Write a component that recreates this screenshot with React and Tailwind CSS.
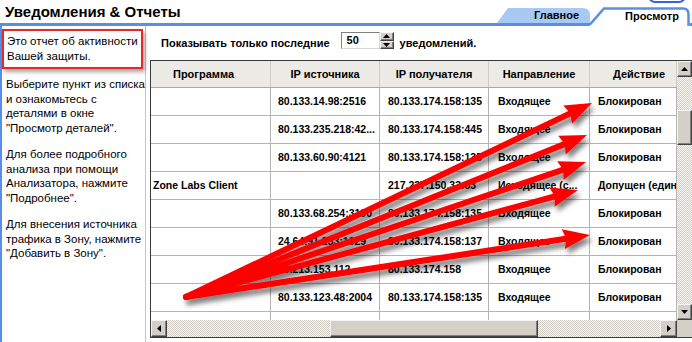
import React from "react";

const BLUE = "#5a8ee6";

const rows = [
  ["", "80.133.14.98:2516", "80.133.174.158:135", "Входящее", "Блокирован"],
  ["", "80.133.235.218:42...", "80.133.174.158:445", "Входящее", "Блокирован"],
  ["", "80.133.60.90:4121", "80.133.174.158:135", "Входящее", "Блокирован"],
  ["Zone Labs Client", "", "217.237.150.33:53", "Исходящее (с...", "Допущен (единичный)"],
  ["", "80.133.68.254:3190", "80.133.174.158:135", "Входящее", "Блокирован"],
  ["", "24.64.91.233:1029", "80.133.174.158:137", "Входящее", "Блокирован"],
  ["", "80.213.153.112", "80.133.174.158", "Входящее", "Блокирован"],
  ["", "80.133.123.48:2004", "80.133.174.158:135", "Входящее", "Блокирован"],
  ["", "80.133.94.149", "80.133.174.158", "Входящее", "Блокирован"],
];

const colW = ["w-[120px]", "w-[109px]", "w-[109px]", "w-[101px]", "w-[87px]"];
const colPad = ["pl-[2px]", "pl-[7px]", "pl-[8px]", "pl-[9px]", "pl-[8px]"];
const headers = ["Программа", "IP источника", "IP получателя", "Направление", "Действие"];
const headPad = ["pr-[14px]", "", "", "", "pl-[12px]"];

function Tri({ dir, w = 7, h = 4 }) {
  const pts = {
    up: `0,${h} ${w / 2},0 ${w},${h}`,
    down: `0,0 ${w / 2},${h} ${w},0`,
  };
  if (dir === "left" || dir === "right") {
    const p = dir === "left" ? `${h},0 0,${w / 2} ${h},${w}` : `0,0 ${h},${w / 2} 0,${w}`;
    return (
      <svg width={h} height={w}>
        <polygon points={p} fill="#000" />
      </svg>
    );
  }
  return (
    <svg width={w} height={h}>
      <polygon points={pts[dir]} fill="#000" />
    </svg>
  );
}

function Btn({ dir, className }) {
  return (
    <div
      className={
        "flex items-center justify-center bg-[#d4d0c8] border border-t-[#f4f4f4] border-l-[#f4f4f4] border-r-[#404040] border-b-[#404040] shadow-[inset_-1px_-1px_0_#808080] " +
        className
      }
    >
      <Tri dir={dir} />
    </div>
  );
}

const dither =
  "bg-[image:repeating-conic-gradient(#d4d0c8_0%_25%,#f5f4ef_0%_50%)] bg-[length:2px_2px]";

const origin = [186, 297];
const tips = [
  [592, 103],
  [587, 135],
  [586, 162],
  [578, 190],
  [590, 235],
];

function Arrow({ tip }) {
  const [x1, y1] = origin;
  const [x2, y2] = tip;
  const dx = x2 - x1;
  const dy = y2 - y1;
  const len = Math.hypot(dx, dy);
  const ux = dx / len;
  const uy = dy / len;
  const L = 27;
  const W = 10;
  const bx = x2 - ux * L;
  const by = y2 - uy * L;
  const nx = -uy;
  const ny = ux;
  return (
    <g>
      <line
        x1={x1}
        y1={y1}
        x2={bx + ux * 4}
        y2={by + uy * 4}
        stroke="#ff0000"
        strokeWidth="6"
        strokeLinecap="round"
      />
      <polygon
        points={`${x2},${y2} ${bx + nx * W},${by + ny * W} ${bx + ux * 3},${by + uy * 3} ${bx - nx * W},${by - ny * W}`}
        fill="#ff0000"
      />
    </g>
  );
}

export default function App() {
  return (
    <div className="relative w-[692px] h-[342px] overflow-hidden bg-white text-black font-['Liberation_Sans',Arial,sans-serif]">
      {/* header */}
      <div className="flex h-[26px]">
        <div className="flex-1 border-b-[3px] border-[#5a8ee6] pl-[5px] pt-[2px] text-[15px] font-bold leading-[20px] whitespace-nowrap">
          Уведомления &amp; Отчеты
        </div>
        <div className="relative w-[93px] border-b-[3px] border-[#5a8ee6]">
          <svg className="absolute left-0 top-[8px]" width="93" height="15">
            <path d="M0 15 L11 0 H86 Q92 0 93 6 V15 Z" fill="#a8c9f3" />
          </svg>
          <span className="relative block pl-[37px] pt-[9px] text-[11px] font-bold leading-[13px]">
            Главное
          </span>
        </div>
        <div className="relative w-[100px]">
          <svg className="absolute left-0 top-[7px]" width="100" height="19">
            <path
              d="M0 17.5 L14 1.5 H93 Q98.5 1.5 98.5 7 V19"
              fill="#ffffff"
              stroke={BLUE}
              strokeWidth="2.5"
            />
          </svg>
          <span className="relative block pl-[35px] pt-[10px] text-[11px] font-bold leading-[13px]">
            Просмотр
          </span>
        </div>
        <div className="w-[2px] border-b-[3px] border-[#5a8ee6]" />
      </div>

      {/* body */}
      <div className="flex h-[316px]">
        {/* left panel */}
        <div className="w-[146px] border-l-2 border-l-[#5a8ee6] border-r border-r-[#c4c4c4] text-[11.5px] leading-[14.5px] whitespace-nowrap">
          <div className="mt-[3px] w-[141px] h-[40px] border-2 border-[#e82828] pl-[3px] pt-[3px] shadow-[2px_3px_4px_rgba(0,0,0,0.35)]">
            Это отчет об активности
            <br />
            Вашей защиты.
          </div>
          <div className="pl-[4px] mt-[8px]">
            <p className="mb-[12px]">
              Выберите пункт из списка
              <br />и ознакомьтесь с
              <br />
              деталями в окне
              <br />
              "Просмотр деталей".
            </p>
            <p className="mb-[12px]">
              Для более подробного
              <br />
              анализа при помощи
              <br />
              Анализатора, нажмите
              <br />
              "Подробнее".
            </p>
            <p>
              Для внесения источника
              <br />
              трафика в Зону, нажмите
              <br />
              "Добавить в Зону".
            </p>
          </div>
        </div>

        {/* right area */}
        <div className="flex-1 flex flex-col">
          <div className="h-[34px] pl-[15px] pt-[6px] flex items-start text-[11px] font-bold whitespace-nowrap">
            <span className="mt-[3px] leading-[17px]">Показывать только последние</span>
            <div className="ml-[11px] flex">
              <div className="w-[39px] h-[17px] border border-t-[#808080] border-l-[#808080] border-r-[#d8d8d8] border-b-[#d8d8d8] bg-white pl-[5px] leading-[15px]">
                50
              </div>
              <div className="w-[14px] h-[17px] flex flex-col">
                <Btn dir="up" className="h-[8.5px]" />
                <Btn dir="down" className="h-[8.5px]" />
              </div>
            </div>
            <span className="ml-[6px] mt-[3px] leading-[17px]">уведомлений.</span>
          </div>

          {/* table */}
          <div className="ml-[4px] w-[542px] border-t border-l border-b border-[#3a3a3a] flex flex-col">
            <div className="flex">
              <div className="w-[526px] flex flex-col">
                <div className="flex h-[27px] bg-[#ebeae4] border-b border-[#a8a8a8] text-[11px] font-bold">
                  {headers.map((h, i) => (
                    <div
                      key={i}
                      className={
                        colW[i] +
                        " " +
                        headPad[i] +
                        " flex items-center justify-center border-r border-r-[#cfcec6] whitespace-nowrap"
                      }
                    >
                      {h}
                    </div>
                  ))}
                </div>
                <div className="h-[232px] overflow-hidden">
                  {rows.map((r, ri) => (
                    <div key={ri} className="flex h-[28px] border-b border-[#b4b4b4] text-[10.5px] font-bold">
                      {r.map((c, ci) => (
                        <div
                          key={ci}
                          className={
                            colW[ci] +
                            " " +
                            colPad[ci] +
                            " flex items-center overflow-hidden whitespace-nowrap border-r border-r-[#b4b4b4]"
                          }
                        >
                          {c}
                        </div>
                      ))}
                    </div>
                  ))}
                </div>
              </div>
              {/* vertical scrollbar */}
              <div className="w-[15px] h-[259px] flex flex-col">
                <Btn dir="up" className="h-[16px]" />
                <div className={"flex-1 " + dither}>
                  <div className="mt-[33px] h-[35px] bg-[#d4d0c8] border border-t-[#f4f4f4] border-l-[#f4f4f4] border-r-[#404040] border-b-[#404040] shadow-[inset_-1px_-1px_0_#808080]" />
                </div>
                <Btn dir="down" className="h-[16px]" />
              </div>
            </div>
            <div className="flex h-[17px]">
              <div className="w-[526px] flex">
                <Btn dir="left" className="w-[16px]" />
                <div className={"flex-1 flex " + dither}>
                  <div className="ml-[163px] w-[208px] bg-[#d4d0c8] border border-t-[#f4f4f4] border-l-[#f4f4f4] border-r-[#404040] border-b-[#404040] shadow-[inset_-1px_-1px_0_#808080]" />
                </div>
                <Btn dir="right" className="w-[17px]" />
              </div>
              <div className="w-[15px] bg-[#d4d0c8]" />
            </div>
          </div>
        </div>
      </div>

      {/* small outline at top right */}
      <div className="absolute left-[648px] top-[-12px] w-[38px] h-[15px] rounded-[7px] border-2 border-[#3a5ee0]" />

      {/* red arrows overlay */}
      <svg className="absolute left-0 top-0 pointer-events-none" width="692" height="342">
        <defs>
          <filter id="sh" x="-10%" y="-10%" width="130%" height="140%">
            <feDropShadow dx="3" dy="5" stdDeviation="2.5" floodColor="#000" floodOpacity="0.5" />
          </filter>
        </defs>
        <g filter="url(#sh)">
          {tips.map((t, i) => (
            <Arrow key={i} tip={t} />
          ))}
        </g>
      </svg>
    </div>
  );
}
